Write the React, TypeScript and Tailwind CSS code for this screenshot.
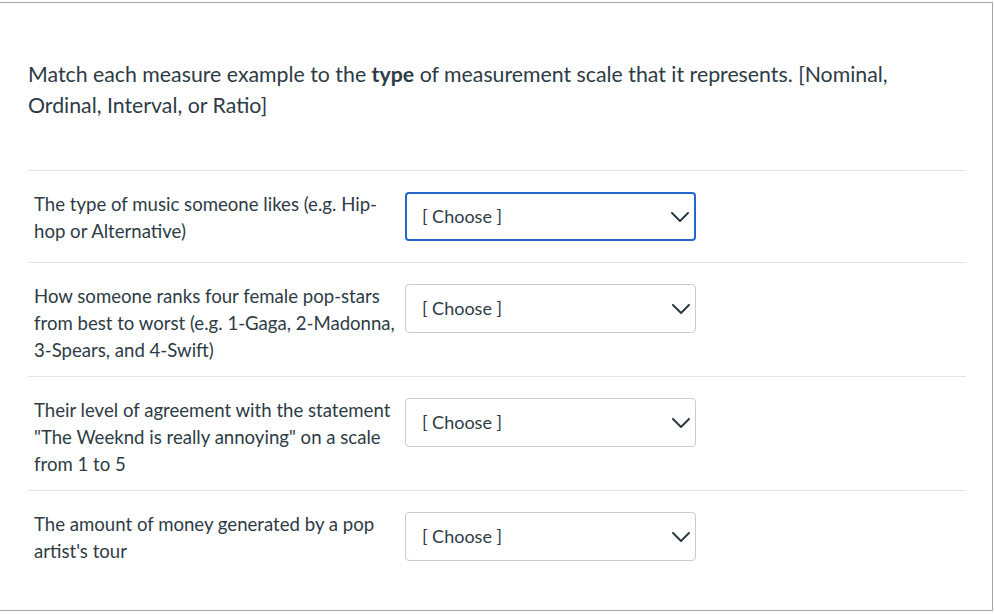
const rows = [
  { id: 1, text: "The type of music someone likes (e.g. Hip-hop or Alternative)", focused: true },
  { id: 2, text: "How someone ranks four female pop-stars from best to worst (e.g. 1-Gaga, 2-Madonna, 3-Spears, and 4-Swift)" },
  { id: 3, text: "Their level of agreement with the statement \"The Weeknd is really annoying\" on a scale from 1 to 5" },
  { id: 4, text: "The amount of money generated by a pop artist's tour" },
];

function ChooseSelect({ focused }: { focused?: boolean }) {
  return (
    <div
      className={
        "flex h-[49px] w-[291px] shrink-0 items-center justify-between rounded-[4px] bg-white pr-[5px] text-[18px] " +
        (focused ? "border-2 border-[#2466cc] pl-[15px]" : "border border-[#c7cdd1] pl-[16px]")
      }
    >
      <span>[ Choose ]</span>
      <svg width="18" height="10" viewBox="0 0 18 10" fill="none" stroke="#2d3b45" strokeWidth="2" strokeLinecap="round" strokeLinejoin="round">
        <polyline points="1,1 9,9 17,1" />
      </svg>
    </div>
  );
}

export default function App() {
  return (
    <div className="h-[614px] w-[994px] bg-white pt-[2px] text-[#2d3b45]" style={{ fontFamily: "Lato, 'Noto Sans', sans-serif" }}>
      <div className="h-[609px] w-[993px] border-b border-r border-t border-[#a5a5a5] px-[28px] pt-[56px]">
        <p className="text-[21.3px] leading-[31px]">
          Match each measure example to the <b>type</b> of measurement scale that it represents. [Nominal, Ordinal, Interval, or Ratio]
        </p>

        <div className="mt-[49px] w-[938px]">
          {rows.map((r) => (
            <div key={r.id} className="flex items-start border-t border-[#e2e5e7] pb-[12px] pt-[20px]">
              <div className="w-[377px] pl-[6px] pr-[4px] text-[18.6px] leading-[27px]">{r.text}</div>
              <div className="mb-[9px] pt-[1px]">
                <ChooseSelect focused={r.focused} />
              </div>
            </div>
          ))}
        </div>
      </div>
    </div>
  );
}
